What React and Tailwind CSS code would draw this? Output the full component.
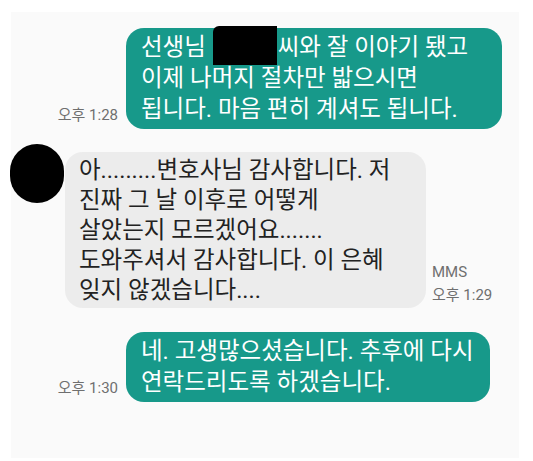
const FONT = "font-['Roboto','Noto_Sans_CJK_KR',sans-serif]"

function Sent({ lines, time, width, right }) {
  return (
    <div className={`flex items-end justify-end gap-2 ${right}`}>
      <span className="mb-[5px] text-[15px] leading-[18px] text-[#6f6f6f]">{time}</span>
      <div className={`rounded-[18px] bg-[#17998a] px-[15px] py-[4px] text-[23.5px] leading-[31px] text-white ${width}`}>
        {lines.map((l, i) => (
          <div key={i} className="whitespace-nowrap">{l}</div>
        ))}
      </div>
    </div>
  )
}

export default function App() {
  return (
    <div className={`h-[461px] w-[533px] bg-white pt-[12px] ${FONT}`}>
      <div className="mx-[11px] flex h-[446px] w-[508px] flex-col bg-[#fafafa] pt-[16px]">
        <Sent
          time="오후 1:28"
          width="w-[376px]"
          right="pr-[17px]"
          lines={[
            <>
              선생님{' '}
              <span className="relative inline-block h-[31px] w-[66px] align-top">
                <span className="absolute left-[1px] top-[-6px] h-[39px] w-[64px] rounded-tl-[6px] bg-black" />
              </span>
              씨와 잘 이야기 됐고
            </>,
            '이제 나머지 절차만 밟으시면',
            '됩니다. 마음 편히 계셔도 됩니다.',
          ]}
        />

        <div className="-ml-px mt-[23px] flex items-start">
          <div className="-mt-[8px] h-[59px] w-[54px] shrink-0 rounded-full bg-black" />
          <div className="ml-px flex items-end gap-[6px]">
            <div className="w-[361px] rounded-[18px] bg-[#ececec] px-[14px] py-[3px] text-[23.5px] leading-[30px] text-[#222]">
              <div className="whitespace-nowrap">아.........변호사님 감사합니다. 저</div>
              <div className="whitespace-nowrap">진짜 그 날 이후로 어떻게</div>
              <div className="whitespace-nowrap">살았는지 모르겠어요.......</div>
              <div className="whitespace-nowrap">도와주셔서 감사합니다. 이 은혜</div>
              <div className="whitespace-nowrap">잊지 않겠습니다....</div>
            </div>
            <div className="mb-[1px] flex flex-col text-[15px] leading-[23px] text-[#6f6f6f]">
              <span>MMS</span>
              <span>오후 1:29</span>
            </div>
          </div>
        </div>

        <div className="mt-[24px]">
          <Sent
            time="오후 1:30"
            width="w-[364px]"
            right="pr-[29px]"
            lines={['네. 고생많으셨습니다. 추후에 다시', '연락드리도록 하겠습니다.']}
          />
        </div>
      </div>
    </div>
  )
}
